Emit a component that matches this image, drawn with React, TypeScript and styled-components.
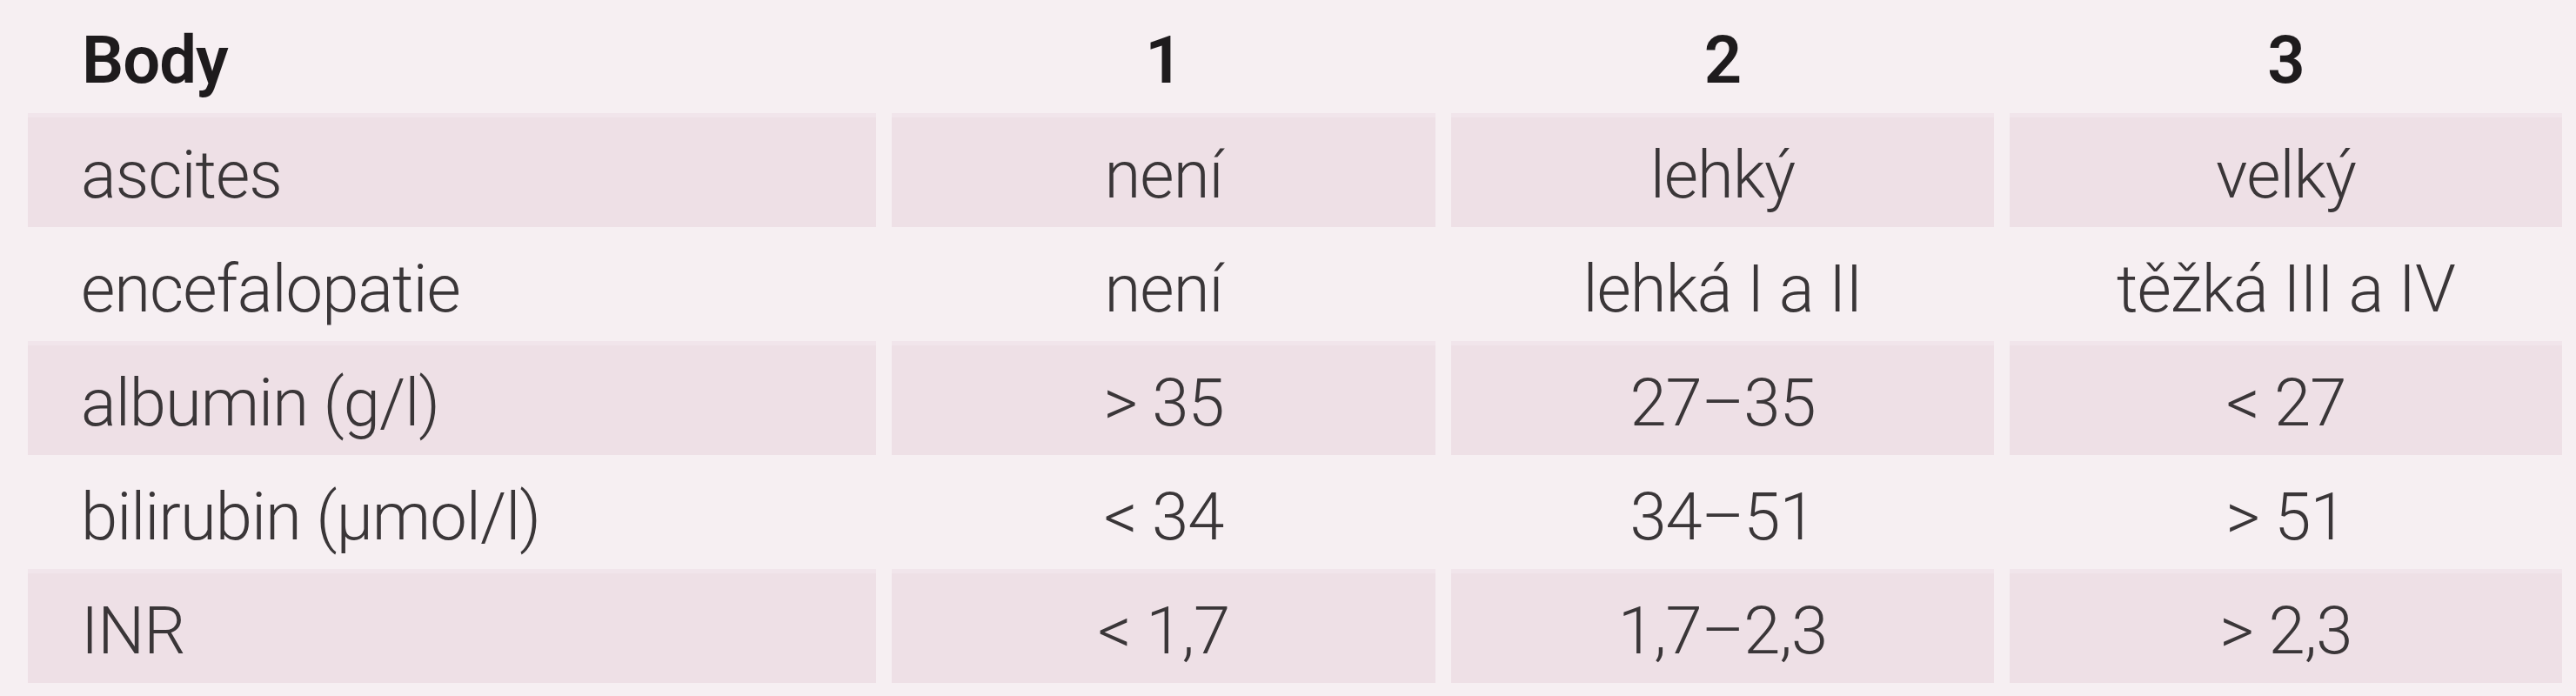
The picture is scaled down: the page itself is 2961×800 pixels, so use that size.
import styled, { createGlobalStyle } from 'styled-components'

const GlobalStyle = createGlobalStyle`
  html, body {
    margin: 0;
    padding: 0;
    background: #f6eff2;
  }
  body {
    font-family: Roboto, "Liberation Sans", sans-serif;
  }
`

const rows = [
  ['ascites', 'není', 'lehký', 'velký'],
  ['encefalopatie', 'není', 'lehká I a II', 'těžká III a IV'],
  ['albumin (g/l)', '> 35', '27–35', '< 27'],
  ['bilirubin (µmol/l)', '< 34', '34–51', '> 51'],
  ['INR', '< 1,7', '1,7–2,3', '> 2,3']
]

function App () {
  return (
    <Page>
      <GlobalStyle />
      <Table>
        <HeadRow>
          <HeadCell $first>Body</HeadCell>
          <HeadCell>1</HeadCell>
          <HeadCell>2</HeadCell>
          <HeadCell>3</HeadCell>
        </HeadRow>
        {rows.map((row, i) => (
          <Row key={row[0]}>
            {row.map((text, j) => (
              <Cell key={j} $first={j === 0} $shaded={i % 2 === 0}>
                {text}
              </Cell>
            ))}
          </Row>
        ))}
      </Table>
    </Page>
  )
}

const Page = styled.div`
  width: 2961px;
  height: 800px;
  padding-left: 32px;
  box-sizing: border-box;
  background: #f6eff2;
`
const Table = styled.div`
  display: flex;
  flex-direction: column;
`
const Row = styled.div`
  display: grid;
  grid-template-columns: 975px 625px 624px 635px;
  column-gap: 18px;
  height: 131px;
`
const HeadRow = styled(Row)`
  height: 130px;
`
const HeadCell = styled.div<{ $first?: boolean }>`
  display: flex;
  align-items: center;
  justify-content: ${p => (p.$first ? 'flex-start' : 'center')};
  padding: 8px 0 0 ${p => (p.$first ? '62px' : '0')};
  font-size: 76px;
  font-weight: 600;
  letter-spacing: -1px;
  color: #1e1b1d;
`
const Cell = styled.div<{ $first?: boolean, $shaded?: boolean }>`
  display: flex;
  align-items: center;
  justify-content: ${p => (p.$first ? 'flex-start' : 'center')};
  padding: 6px 0 0 ${p => (p.$first ? '61px' : '0')};
  box-sizing: border-box;
  background: ${p => (p.$shaded ? '#eee0e6' : 'transparent')};
  border-top: 5px solid ${p => (p.$shaded ? '#f1e5eb' : 'transparent')};
  font-size: 76px;
  font-weight: 300;
  letter-spacing: -1px;
  color: #3a3638;
  white-space: nowrap;
`

export default App
